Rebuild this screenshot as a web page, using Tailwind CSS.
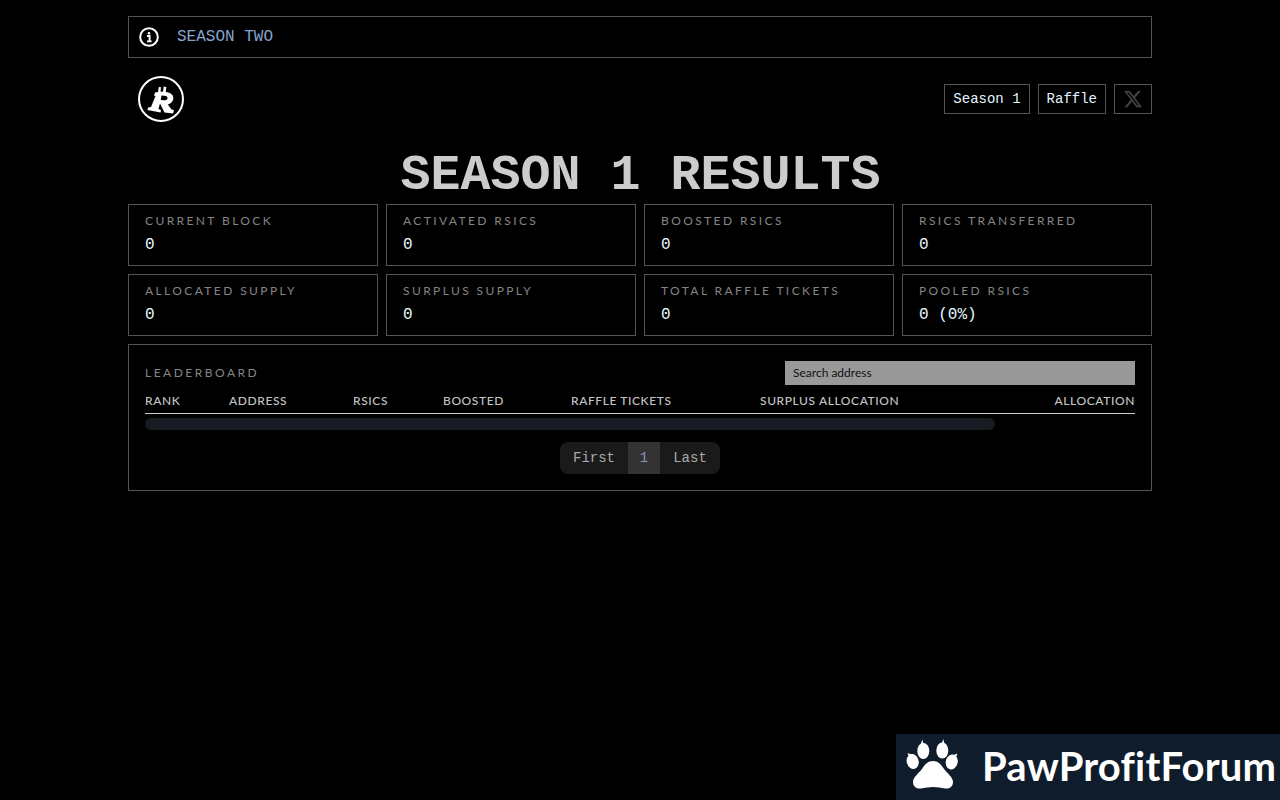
<!DOCTYPE html>
<html lang="en">
<head>
  <meta charset="UTF-8" />
  <title>Season 1 Results</title>
  <script src="https://cdn.jsdelivr.net/npm/@tailwindcss/browser@4"></script>
</head>
<body class="bg-black min-h-screen font-['Liberation_Mono',monospace]">
  <div class="w-[1024px] mx-auto pt-4">
    <!-- banner -->
    <div class="h-[42px] border border-[#555] flex items-center pl-[10px] gap-[18px]">
      <svg class="w-5 h-5" viewBox="0 0 20 20" fill="none">
        <circle cx="10" cy="10" r="8.8" stroke="#fff" stroke-width="2"/>
        <circle cx="10" cy="6.2" r="1.3" fill="#fff"/>
        <path d="M8 9h2.6v5M8 14.4h4.6" stroke="#fff" stroke-width="1.9"/>
      </svg>
      <span class="text-base text-[#86a5cc]">SEASON TWO</span>
    </div>

    <!-- header -->
    <div class="flex items-center justify-between h-[46px] mt-[18px] pl-[10px]">
      <svg class="w-[46px] h-[46px]" viewBox="0 0 46 46" fill="none">
        <circle cx="23" cy="23" r="22" stroke="#fff" stroke-width="2"/>
        <path fill="#fff" fill-rule="evenodd" d="M17 16.500L20 16L20.800 11L23 11.300L22.500 15.500L25 15.700L25.800 10.500L28.300 10.900L27.800 16C32.500 16.500 35.800 19 35.300 22.800C34.900 26 32.500 28 29.800 28.500L33.500 33.500L36 34L35 37.500L26.500 36.500L22 27.500L20.500 33L23 34L22.500 36.500L9.500 34L10 31.500L13 31L17.500 20L16 19.500ZM23.500 19.500L22.700 24L26 24.300C28 24.500 29.500 23.500 29.500 22C29.500 20.500 28 19.800 26.500 19.700Z"/>
      </svg>
      <div class="flex items-center gap-2">
        <a class="h-[30px] px-2 border border-[#555] text-sm text-[#e6f4ff] flex items-center">Season 1</a>
        <a class="h-[30px] px-2 border border-[#555] text-sm text-[#e6f4ff] flex items-center">Raffle</a>
        <a class="h-[30px] w-[38px] border border-[#555] flex items-center justify-center">
          <svg class="w-5 h-5" viewBox="0 0 24 24" fill="#444"><path d="M18.2 2.300h3.300l-7.200 8.300 8.500 11.200h-6.700l-5.200-6.800-6 6.800H1.700l7.700-8.800L1.300 2.300h6.800l4.700 6.200zm-1.200 17.500h1.800L7 4.100H5z"/></svg>
        </a>
      </div>
    </div>

    <h1 class="text-[50px] leading-[56px] font-bold text-[#ccc] text-center pl-[1px] mt-[26px] h-[56px]">SEASON 1 RESULTS</h1>

    <!-- stats -->
    <div class="grid grid-cols-4 gap-2 font-['Lato',sans-serif]">
      <div class="h-[62px] border border-[#555] px-4 pt-2"><div class="text-xs leading-[15px] tracking-[2.4px] text-[#858585]">CURRENT BLOCK</div><div class="font-['Liberation_Mono',monospace] text-base leading-[24px] mt-[5px] text-[#e6f9ff]">0</div></div>
      <div class="h-[62px] border border-[#555] px-4 pt-2"><div class="text-xs leading-[15px] tracking-[2.4px] text-[#858585]">ACTIVATED RSICS</div><div class="font-['Liberation_Mono',monospace] text-base leading-[24px] mt-[5px] text-[#e6f9ff]">0</div></div>
      <div class="h-[62px] border border-[#555] px-4 pt-2"><div class="text-xs leading-[15px] tracking-[2.4px] text-[#858585]">BOOSTED RSICS</div><div class="font-['Liberation_Mono',monospace] text-base leading-[24px] mt-[5px] text-[#e6f9ff]">0</div></div>
      <div class="h-[62px] border border-[#555] px-4 pt-2"><div class="text-xs leading-[15px] tracking-[2.4px] text-[#858585]">RSICS TRANSFERRED</div><div class="font-['Liberation_Mono',monospace] text-base leading-[24px] mt-[5px] text-[#e6f9ff]">0</div></div>
      <div class="h-[62px] border border-[#555] px-4 pt-2"><div class="text-xs leading-[15px] tracking-[2.4px] text-[#858585]">ALLOCATED SUPPLY</div><div class="font-['Liberation_Mono',monospace] text-base leading-[24px] mt-[5px] text-[#e6f9ff]">0</div></div>
      <div class="h-[62px] border border-[#555] px-4 pt-2"><div class="text-xs leading-[15px] tracking-[2.4px] text-[#858585]">SURPLUS SUPPLY</div><div class="font-['Liberation_Mono',monospace] text-base leading-[24px] mt-[5px] text-[#e6f9ff]">0</div></div>
      <div class="h-[62px] border border-[#555] px-4 pt-2"><div class="text-xs leading-[15px] tracking-[2.4px] text-[#858585]">TOTAL RAFFLE TICKETS</div><div class="font-['Liberation_Mono',monospace] text-base leading-[24px] mt-[5px] text-[#e6f9ff]">0</div></div>
      <div class="h-[62px] border border-[#555] px-4 pt-2"><div class="text-xs leading-[15px] tracking-[2.4px] text-[#858585]">POOLED RSICS</div><div class="font-['Liberation_Mono',monospace] text-base leading-[24px] mt-[5px] text-[#e6f9ff]">0 (0%)</div></div>
    </div>

    <!-- leaderboard -->
    <div class="h-[147px] mt-2 border border-[#555] px-4 pt-4 font-['Lato',sans-serif]">
      <div class="flex items-center justify-between h-6">
        <span class="text-xs tracking-[2.5px] text-[#858585]">LEADERBOARD</span>
        <input type="text" placeholder="Search address" class="w-[350px] h-6 bg-[#999] px-2 pb-[2px] text-xs text-black placeholder:text-[#111] outline-none" />
      </div>
      <table class="w-full table-fixed mt-[5px]">
        <thead>
          <tr class="border-b border-[#ccc] text-xs text-[#c4c4c4] tracking-[0.6px]">
            <th class="w-[84px] h-[23px] text-left font-medium p-0">RANK</th>
            <th class="w-[124px] text-left font-medium p-0">ADDRESS</th>
            <th class="w-[90px] text-left font-medium p-0">RSICS</th>
            <th class="w-[128px] text-left font-medium p-0">BOOSTED</th>
            <th class="w-[189px] text-left font-medium p-0">RAFFLE TICKETS</th>
            <th class="w-[200px] text-left font-medium p-0">SURPLUS ALLOCATION</th>
            <th class="text-right font-medium p-0">ALLOCATION</th>
          </tr>
        </thead>
      </table>
      <div class="w-[850px] h-3 mt-1 rounded-full bg-[#181c22]"></div>
      <div class="flex justify-center mt-3 font-['Liberation_Mono',monospace] text-sm">
        <div class="flex h-8 rounded-lg overflow-hidden bg-[#1a1a1a] text-[#aaa]">
          <span class="w-[68px] flex items-center justify-center">First</span>
          <span class="w-8 flex items-center justify-center bg-[#333] text-[#8a97b0]">1</span>
          <span class="w-[60px] flex items-center justify-center">Last</span>
        </div>
      </div>
    </div>
  </div>

  <!-- watermark -->
  <div class="fixed right-0 bottom-0 w-[384px] h-[66px] bg-[#0e1c2b] flex items-center pl-[10px]">
    <svg class="w-[54px] h-[54px] shrink-0 self-start mt-[5px]" viewBox="906 739 54 54" fill="#fff">
      <ellipse cx="923.300" cy="751" rx="6" ry="8"/>
      <ellipse cx="942.300" cy="750.500" rx="6" ry="8"/>
      <ellipse cx="912.700" cy="761.500" rx="6" ry="7.500" transform="rotate(-15 912.700 761.500)"/>
      <ellipse cx="951.700" cy="762" rx="6" ry="7.500" transform="rotate(15 951.700 762)"/>
      <path d="M933 761c5 0 8 3 11 8 3 4 9 8 9 13 0 5-4 7-8 6.500-4-.5-8-1.500-12-1.500s-8 1-12 1.500c-4 .5-8-1.500-8-6.500 0-5 6-9 9-13 3-5 6-8 11-8z"/>
      <path d="M922.200 739.500l1.500 5-3 0zM943.300 739l1.200 5-3 0zM907.500 753l4 1.500-2.500 2.500zM957.500 753.500l-4 1.500 2.500 2.500z"/>
    </svg>
    <span class="ml-[22px] mb-[2px] font-['Lato',sans-serif] font-bold text-[40px] leading-none tracking-[0.2px] text-white">PawProfitForum</span>
  </div>
</body>
</html>
